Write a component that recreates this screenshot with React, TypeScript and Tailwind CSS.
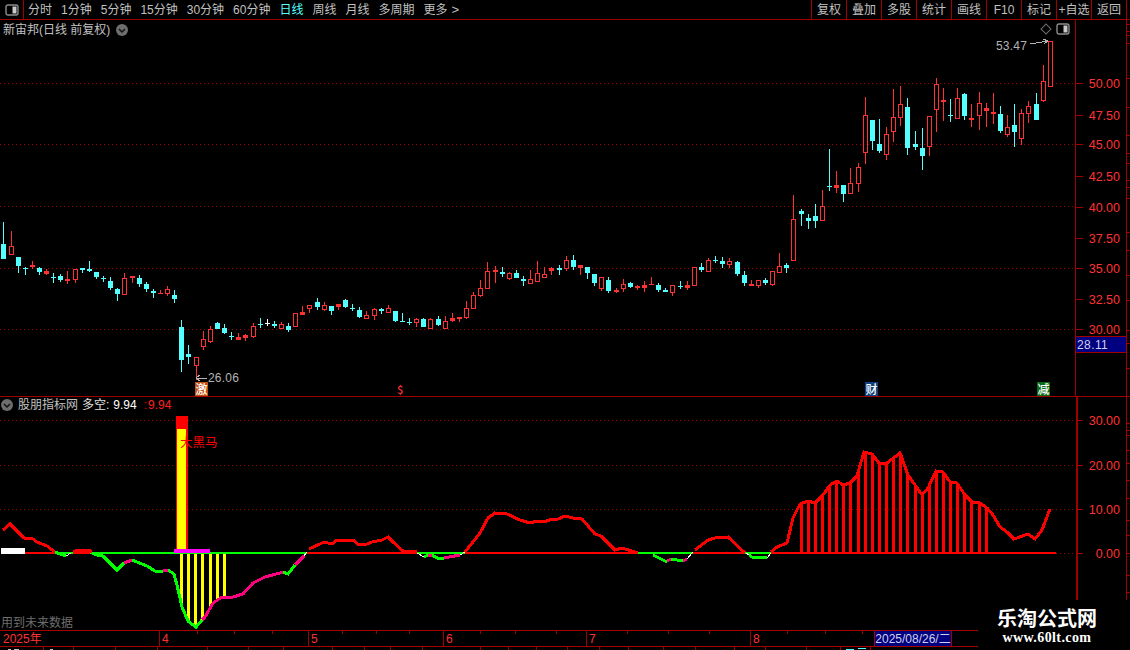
const RED = "#ff3232"
const GRID = "#a00000"
const CYAN = "#54ffff"
const UI_FONT = "font-['Liberation_Sans','Noto_Sans_CJK_SC',sans-serif]"

type Candle = [number, number, number, number, "r" | "c" | "w"]

// high, body top, body bottom, low - in page pixels, one candle every 7.12px
const candles: Candle[] = [
  [222, 244, 259, 259, "c"], [231, 246, 255, 255, "r"], [257, 257, 266, 273, "c"], [267, 268, 269, 275, "c"],
  [261, 265, 267, 269, "r"], [267, 268, 272, 275, "c"], [269, 271, 274, 275, "r"], [273, 277, 278, 283, "c"],
  [274, 276, 280, 282, "c"], [271, 279, 281, 284, "r"], [269, 269, 280, 283, "r"], [268, 268, 270, 273, "c"],
  [261, 269, 271, 272, "c"], [272, 272, 277, 279, "c"], [276, 278, 279, 282, "c"], [277, 281, 288, 290, "c"],
  [288, 289, 294, 301, "c"], [273, 278, 295, 295, "r"], [276, 276, 278, 283, "r"], [275, 278, 284, 287, "c"],
  [282, 284, 289, 292, "c"], [289, 291, 293, 298, "c"], [290, 293, 294, 294, "r"], [286, 289, 294, 296, "r"],
  [290, 295, 299, 303, "c"], [320, 327, 360, 372, "c"], [345, 354, 357, 364, "c"], [357, 357, 366, 380, "r"],
  [331, 339, 347, 350, "r"], [326, 329, 342, 343, "r"], [322, 323, 329, 329, "c"], [324, 328, 333, 334, "c"],
  [332, 336, 337, 340, "c"], [333, 337, 340, 340, "r"], [334, 335, 338, 341, "r"], [323, 326, 337, 338, "r"],
  [318, 324, 325, 328, "c"], [319, 323, 324, 326, "w"], [321, 324, 326, 328, "c"], [322, 324, 329, 329, "r"],
  [323, 326, 330, 332, "c"], [313, 313, 327, 327, "r"], [306, 312, 315, 315, "r"], [305, 305, 309, 313, "r"],
  [298, 302, 307, 310, "c"], [302, 305, 310, 311, "r"], [306, 306, 311, 315, "c"], [304, 304, 307, 310, "r"],
  [299, 300, 307, 308, "c"], [304, 308, 309, 311, "c"], [307, 310, 317, 318, "c"], [311, 315, 319, 319, "r"],
  [308, 309, 316, 320, "r"], [308, 309, 311, 314, "c"], [305, 308, 313, 313, "r"], [311, 311, 321, 322, "c"],
  [313, 321, 322, 322, "c"], [318, 322, 323, 325, "c"], [318, 319, 323, 327, "r"], [318, 319, 327, 327, "c"],
  [318, 319, 329, 329, "r"], [316, 319, 325, 326, "c"], [316, 321, 329, 329, "r"], [313, 318, 321, 322, "r"],
  [317, 317, 319, 322, "r"], [301, 308, 318, 319, "r"], [292, 295, 309, 309, "r"], [280, 288, 296, 297, "r"],
  [262, 271, 289, 289, "r"], [266, 270, 272, 283, "r"], [267, 272, 274, 277, "c"], [272, 273, 279, 280, "r"],
  [270, 273, 278, 278, "c"], [276, 279, 281, 286, "c"], [270, 279, 284, 284, "r"], [261, 273, 282, 282, "r"],
  [267, 274, 278, 278, "r"], [267, 268, 271, 275, "r"], [265, 268, 270, 275, "c"], [256, 260, 269, 271, "r"],
  [255, 260, 267, 270, "c"], [265, 265, 268, 275, "r"], [267, 267, 273, 279, "c"], [274, 274, 283, 286, "c"],
  [277, 277, 289, 291, "r"], [277, 280, 291, 293, "c"], [288, 290, 292, 293, "r"], [279, 284, 289, 292, "r"],
  [282, 283, 287, 288, "c"], [285, 286, 288, 290, "r"], [281, 285, 288, 292, "r"], [277, 284, 285, 285, "r"],
  [283, 285, 290, 292, "c"], [288, 290, 292, 292, "c"], [285, 285, 293, 296, "r"], [281, 286, 287, 289, "c"],
  [281, 285, 288, 290, "r"], [267, 267, 286, 286, "r"], [263, 267, 270, 272, "c"], [258, 260, 272, 272, "r"],
  [256, 260, 261, 263, "c"], [257, 261, 264, 268, "c"], [258, 261, 265, 268, "r"], [261, 262, 274, 276, "c"],
  [271, 275, 283, 286, "c"], [280, 284, 286, 286, "r"], [280, 280, 286, 288, "r"], [278, 280, 283, 285, "c"],
  [271, 271, 285, 286, "r"], [253, 266, 273, 273, "r"], [263, 265, 268, 273, "c"], [195, 219, 261, 261, "r"],
  [209, 211, 214, 226, "c"], [214, 218, 221, 229, "c"], [204, 216, 221, 228, "c"], [190, 206, 221, 221, "r"],
  [149, 186, 187, 191, "c"], [171, 185, 188, 193, "r"], [185, 185, 194, 202, "c"], [168, 183, 194, 194, "r"],
  [163, 167, 184, 192, "r"], [97, 115, 153, 164, "r"], [120, 120, 141, 150, "c"], [119, 144, 151, 153, "c"],
  [127, 134, 155, 160, "r"], [89, 117, 132, 142, "r"], [86, 104, 118, 126, "r"], [98, 107, 148, 155, "c"],
  [131, 144, 147, 150, "c"], [128, 148, 156, 170, "c"], [116, 116, 147, 156, "r"], [78, 84, 110, 132, "r"],
  [88, 100, 102, 121, "r"], [99, 115, 116, 122, "c"], [88, 98, 119, 119, "r"], [93, 94, 116, 120, "c"],
  [104, 118, 120, 127, "r"], [92, 103, 116, 130, "r"], [103, 108, 111, 127, "r"], [93, 112, 114, 124, "r"],
  [106, 114, 131, 133, "c"], [115, 127, 135, 137, "r"], [104, 125, 132, 147, "c"], [109, 113, 139, 145, "r"],
  [101, 106, 114, 123, "r"], [93, 104, 120, 120, "c"], [65, 81, 101, 102, "r"], [41, 41, 87, 87, "r"],
]

const cx = (i: number) => Math.round(3.4 + 7.118 * i)

type Pt = [number, number]
type Segment = { color: string; pts: Pt[] }

const segments: Segment[] = [
  { color: "#ff0000", pts: [[3, 530], [10, 524], [24, 538], [33, 539], [37, 542], [47, 546], [55, 552]] },
  { color: "#00ff00", pts: [[55, 552], [60, 554], [66, 556]] },
  { color: "#ffffff", pts: [[66, 556], [71, 553]] },
  { color: "#ff0000", pts: [[73, 552], [78, 550], [89, 550], [92, 552]] },
  { color: "#00ff00", pts: [[92, 553], [97, 555], [103, 556], [117, 570], [124, 563]] },
  { color: "#ff0080", pts: [[124, 563], [132, 560]] },
  { color: "#00ff00", pts: [[132, 560], [147, 566], [155, 571], [163, 571]] },
  { color: "#ff0080", pts: [[163, 570], [168, 570]] },
  { color: "#00ff00", pts: [[168, 570], [174, 574], [177, 585], [182, 607], [188, 621], [196, 627], [202, 620]] },
  { color: "#ff0080", pts: [[202, 620], [205, 617], [213, 603], [222, 597], [233, 597], [243, 594], [253, 583], [265, 577], [280, 573], [283, 572]] },
  { color: "#00ff00", pts: [[283, 572], [288, 574], [295, 565]] },
  { color: "#ff0080", pts: [[295, 565], [304, 556]] },
  { color: "#ffffff", pts: [[304, 556], [307, 552]] },
  { color: "#ff0000", pts: [[309, 549], [320, 544], [324, 542], [332, 544], [337, 540], [353, 540], [358, 544], [367, 544], [372, 542], [382, 540], [388, 537], [393, 542], [403, 551], [417, 552]] },
  { color: "#ffffff", pts: [[417, 553], [424, 557]] },
  { color: "#00ff00", pts: [[424, 557], [428, 555]] },
  { color: "#ff0080", pts: [[428, 555], [432, 555]] },
  { color: "#00ff00", pts: [[432, 555], [439, 559], [444, 558]] },
  { color: "#ff0080", pts: [[444, 558], [460, 555]] },
  { color: "#ffffff", pts: [[460, 555], [465, 552]] },
  { color: "#ff0000", pts: [[465, 552], [480, 533], [488, 518], [495, 513], [507, 514], [520, 520], [530, 523], [537, 521], [544, 522], [552, 519], [558, 519], [565, 516], [573, 518], [582, 519], [595, 534], [601, 536], [615, 550], [622, 548], [638, 553]] },
  { color: "#00ff00", pts: [[653, 555], [667, 562]] },
  { color: "#ff0080", pts: [[667, 561], [671, 559]] },
  { color: "#00ff00", pts: [[671, 559], [683, 561]] },
  { color: "#ff0080", pts: [[683, 561], [687, 559]] },
  { color: "#ffffff", pts: [[687, 559], [693, 552]] },
  { color: "#ff0000", pts: [[695, 550], [708, 540], [715, 538], [728, 537], [745, 553]] },
  { color: "#ffffff", pts: [[746, 553], [749, 555]] },
  { color: "#00ff00", pts: [[749, 555], [752, 557], [767, 558]] },
  { color: "#ffffff", pts: [[767, 558], [771, 553]] },
  { color: "#ff0000", pts: [[771, 552], [777, 547], [787, 543], [793, 518], [800, 504], [808, 501], [815, 503], [823, 495], [830, 485], [837, 481], [843, 485], [850, 483], [857, 476], [864, 452], [872, 454], [879, 463], [887, 463], [900, 453], [908, 475], [922, 495], [928, 488], [936, 471], [943, 472], [950, 482], [957, 483], [965, 495], [972, 502], [980, 503], [987, 508], [993, 515], [1000, 527], [1007, 532], [1014, 539], [1028, 534], [1035, 539], [1042, 530], [1050, 509]] },
]

const allPts = segments.flatMap((s) => s.pts)

function lineY(x: number) {
  for (let i = 0; i < allPts.length - 1; i++) {
    const [x0, y0] = allPts[i]
    const [x1, y1] = allPts[i + 1]
    if (x >= x0 && x <= x1 && x1 > x0) return y0 + ((y1 - y0) * (x - x0)) / (x1 - x0)
  }
  return 553
}

const redBars = Array.from({ length: 27 }, (_, i) => cx(112 + i))
const yellowBars = [181, 188, 195, 202, 210, 217, 224]
const greenZero: Pt[] = [[55, 73], [90, 307], [417, 465], [638, 693], [745, 771]]

const priceLabels = [
  ["50.00", 83], ["47.50", 115], ["45.00", 144], ["42.50", 176], ["40.00", 207],
  ["37.50", 238], ["35.00", 268], ["32.50", 299], ["30.00", 329],
] as const
const priceGrid = [83, 144, 206, 268, 329]
const indicatorLabels = [["30.00", 420], ["20.00", 465], ["10.00", 509], ["0.00", 553]] as const
const edgeTicksTop = [24, 31, 35, 43, 78, 107, 135, 153, 163, 180, 187, 198, 232, 250, 275, 300, 330, 343, 368]
const edgeTicksBottom = [423, 430, 435, 450, 463, 480, 498, 520, 535, 553, 575, 592]

const leftTabs = ["分时", "1分钟", "5分钟", "15分钟", "30分钟", "60分钟", "日线", "周线", "月线", "多周期", "更多"]
const rightTabs = ["复权", "叠加", "多股", "统计", "画线", "F10", "标记", "+自选", "返回"]
const months = [
  { label: "2025年", w: "w-[159px]" },
  { label: "4", w: "w-[149px]" },
  { label: "5", w: "w-[135px]" },
  { label: "6", w: "w-[143px]" },
  { label: "7", w: "w-[164px]" },
  { label: "8", w: "w-[124px]" },
]
const dateTicksUp = [197, 234, 272, 342, 376, 409, 480, 515, 556, 627, 668, 709, 787, 825, 862]
const dateTicksDown = [43, 73, 115, 157, 207, 248, 283, 332, 364, 390, 422, 480, 508, 536, 567, 599, 628, 663, 695, 734, 765, 806, 840, 870]

function PanelIcon() {
  return (
    <svg width="14" height="12" viewBox="0 0 14 12" className="shrink-0">
      <rect x="1" y="1" width="12" height="10" rx="2" fill="none" stroke="#8c8c8c" strokeWidth="1.4" />
      <rect x="7.5" y="2.5" width="4" height="7" fill="#c8c8c8" />
    </svg>
  )
}

function ChevronDot() {
  return (
    <svg width="12" height="12" viewBox="0 0 12 12" className="shrink-0">
      <circle cx="6" cy="6" r="6" fill="#6e6e6e" />
      <path d="M3 5 L6 8 L9 5" fill="none" stroke="#111" strokeWidth="1.5" />
    </svg>
  )
}

function DotPattern({ id }: { id: string }) {
  return (
    <defs>
      <pattern id={id} width="4" height="1" patternUnits="userSpaceOnUse">
        <rect width="1" height="1" fill={GRID} />
      </pattern>
    </defs>
  )
}

function Toolbar() {
  return (
    <div className="flex h-[20px] shrink-0 items-stretch border-b border-[#a00000] text-[12px] text-[#c0c0c0]">
      <div className="flex w-[24px] items-center justify-center border-r border-[#a00000]">
        <PanelIcon />
      </div>
      <div className="flex items-center gap-[9px] pl-[4px]">
        {leftTabs.map((t) => (
          <span key={t} className={t === "日线" ? "text-[#54ffff]" : ""}>{t}</span>
        ))}
        <span className="-ml-[5px] text-[13px]">&gt;</span>
      </div>
      <div className="ml-auto mr-[3px] flex border-r border-[#a00000]">
        {rightTabs.map((t) => (
          <div key={t} className="flex w-[35px] items-center justify-center border-l border-[#a00000] whitespace-nowrap">
            {t}
          </div>
        ))}
      </div>
    </div>
  )
}

function PriceChart() {
  return (
    <svg width="1075" height="376" viewBox="0 20 1075 376" className="[shape-rendering:crispEdges] shrink-0">
      <DotPattern id="priceDots" />
      {priceGrid.map((y) => (
        <rect key={y} x="0" y={y} width="1075" height="1" fill="url(#priceDots)" />
      ))}
      {candles.map(([high, top, bottom, low, kind], i) => {
        const x = cx(i)
        const color = kind === "r" ? RED : kind === "c" ? CYAN : "#ffffff"
        return (
          <g key={i}>
            <rect x={x} y={high} width={1} height={low - high} fill={color} />
            {kind === "r" && bottom - top > 3 ? (
              <rect x={x - 1.5} y={top + 0.5} width={4} height={bottom - top - 1} fill="#000" stroke={color} />
            ) : (
              <rect x={x - 2} y={top} width={5} height={Math.max(bottom - top, 1)} fill={color} />
            )}
          </g>
        )
      })}
      <g fill="none" stroke="#b4b4b4">
        <path d="M1030 44 L1048 41 M1043 39 L1048 41 L1044 44" />
        <path d="M196 378 L207 378 M200 375 L196 378 L200 381" />
      </g>
      <g className="font-['Liberation_Sans',sans-serif] [shape-rendering:auto]" fontSize="12" fill="#b4b4b4" letterSpacing="0.2">
        <text x="996" y="50">53.47</text>
        <text x="208" y="382">26.06</text>
      </g>
      <g className="font-['Noto_Sans_CJK_SC',sans-serif]" fontSize="12" fontWeight="500">
        <rect x="195" y="382" width="13" height="14" fill="#c0500f" />
        <text x="195.5" y="393.5" fill="#ffffff">激</text>
        <text x="397" y="394" fill={RED} fontSize="11">$</text>
        <rect x="865" y="382" width="13" height="14" fill="#0f3f80" />
        <text x="865.5" y="393.5" fill="#ffffff">财</text>
        <rect x="1037" y="382" width="13" height="14" fill="#0a6a12" />
        <text x="1037.5" y="393.5" fill="#ffffff">减</text>
      </g>
    </svg>
  )
}

function AxisSvg({ top, height, labels, ticks, thick }: { top: number; height: number; labels: readonly (readonly [string, number])[]; ticks: number[]; thick?: boolean }) {
  return (
    <svg width="55" height={height} viewBox={`1075 ${top} 55 ${height}`} className="[shape-rendering:crispEdges] shrink-0">
      <rect x={thick ? 1076 : 1075} y={top} width={thick ? 2 : 1} height={height} fill="#a00000" />
      <rect x="1126" y={top} width="1" height={height} fill="#a00000" />
      {labels.map(([label, y]) => (
        <g key={label}>
          <rect x="1076" y={y} width="7" height="1" fill="#a00000" />
          <text x="1120" y={y + 5} textAnchor="end" fontSize="12.5" fill={RED} className="font-['Liberation_Sans',sans-serif] [shape-rendering:auto]">
            {label}
          </text>
        </g>
      ))}
      {ticks.map((y) => (
        <rect key={y} x="1127" y={y} width="3" height="1" fill="#a00000" />
      ))}
    </svg>
  )
}

function IndicatorChart() {
  return (
    <svg width="1075" height="233" viewBox="0 397 1075 233" className="[shape-rendering:crispEdges] shrink-0">
      <DotPattern id="indicatorDots" />
      {[420, 465, 509].map((y) => (
        <rect key={y} x="0" y={y} width="1075" height="1" fill="url(#indicatorDots)" />
      ))}
      <rect x="1056" y="553" width="19" height="1" fill="url(#indicatorDots)" />

      {/* 多空 columns */}
      {redBars.map((x) => (
        <rect key={x} x={x - 1} y={lineY(x)} width={3} height={553 - lineY(x)} fill="#ff0000" />
      ))}
      {yellowBars.map((x) => (
        <rect key={x} x={x - 1} y={553} width={3} height={lineY(x) - 553} fill="#ffff00" />
      ))}

      <rect x="25" y="552" width="1031" height="2" fill="#ff0000" />
      {greenZero.map(([a, b]) => (
        <rect key={a} x={a} y="552" width={b - a} height="2" fill="#00ff00" />
      ))}
      <rect x="1" y="548" width="24" height="6" fill="#ffffff" />

      <rect x="176" y="416" width="12" height="137" fill="#ff0000" />
      <rect x="177" y="429" width="9" height="124" fill="#ffff00" />
      <rect x="174" y="549" width="36" height="4" fill="#ff00ff" />

      {segments.map((s, i) => (
        <polyline
          key={i}
          points={s.pts.map((p) => p.join(",")).join(" ")}
          fill="none"
          stroke={s.color}
          strokeWidth={s.color === "#ffffff" ? 1 : 3}
        />
      ))}

      <text x="180" y="446.5" fontSize="12.5" fill="#ff0000" className="font-['Noto_Sans_CJK_SC',sans-serif] [shape-rendering:auto]">大黑马</text>
    </svg>
  )
}

export default function App() {
  return (
    <div className={`relative flex h-[650px] w-[1130px] flex-col overflow-hidden bg-black ${UI_FONT}`}>
      <Toolbar />

      <div className="relative flex h-[377px] shrink-0 items-start border-b border-[#a00000]">
        <PriceChart />
        <AxisSvg top={20} height={376} labels={priceLabels} ticks={edgeTicksTop} />

        <div className="absolute left-[3px] top-[2px] flex items-center gap-[6px] text-[12px] leading-[16px] text-[#c0c0c0]">
          <span>新宙邦(日线 前复权)</span>
          <ChevronDot />
        </div>
        <div className="absolute left-[1042px] top-[3px] flex items-center gap-[6px]">
          <span className="h-[8px] w-[8px] rotate-45 border border-[#6e6e6e]" />
          <PanelIcon />
        </div>
        <div className="absolute left-[1076px] top-[317px] flex h-[15px] w-[50px] items-center bg-[#000080] pl-[1px] text-[12px] tracking-[0.4px] text-[#d0d0e8] outline outline-[#a00000]">
          28.11
        </div>
      </div>

      <div className="relative flex h-[234px] shrink-0 items-start border-b border-[#a00000]">
        <IndicatorChart />
        <AxisSvg top={397} height={233} labels={indicatorLabels} ticks={edgeTicksBottom} thick />

        <div className="absolute left-[1px] top-[0px] flex items-center text-[12px] leading-[16px] text-[#c0c0c0]">
          <ChevronDot />
          <span className="ml-[5px]">股朋指标网</span>
          <span className="ml-[4px] text-[#e0e0e0]">多空:</span>
          <span className="ml-[4px] text-white">9.94</span>
          <span className="ml-[7px] text-[#ff0000]">:</span>
          <span className="ml-[1px] text-[#ff2020]">9.94</span>
        </div>
        <span className="absolute bottom-0 left-[1px] text-[12px] leading-[14px] text-[#6e6e6e]">用到未来数据</span>
      </div>

      <div className="relative flex h-[16px] w-[978px] shrink-0 border-b border-[#a00000] text-[12px] leading-[16px] text-[#ff3232]">
        {months.map((m, i) => (
          <div key={m.label} className={`${m.w} ${i > 0 ? "border-l border-[#a00000] pl-[2px]" : "pl-[3px]"}`}>
            {m.label}
          </div>
        ))}
        <div className="w-[78px] border-x border-[#a00000] bg-[#000080] text-center text-[#d0d0e8]">2025/08/26/二</div>
        {dateTicksUp.map((x) => (
          <svg key={x} width="1" height="3" className="absolute top-0" style={{ left: x }}>
            <rect width="1" height="3" fill="#a00000" />
          </svg>
        ))}
      </div>

      {/* tick stubs and the top edge of the hidden tab row */}
      <svg width="978" height="3" className="[shape-rendering:crispEdges] shrink-0">
        {dateTicksDown.map((x) => (
          <rect key={x} x={x} y="0" width="1" height="3" fill="#a00000" />
        ))}
        <rect x="8" y="2" width="3" height="1" fill="#c0c0c0" />
        <rect x="14" y="2" width="5" height="1" fill="#c0c0c0" />
        <rect x="50" y="2" width="3" height="1" fill="#c0c0c0" />
        <rect x="846" y="2" width="8" height="1" fill="#54ffff" />
        <rect x="858" y="1" width="8" height="1" fill="#54ffff" />
      </svg>

      {/* site watermark sits on top of the chart corner */}
      <div className="absolute bottom-0 right-0 flex h-[50px] w-[152px] flex-col items-center bg-black pr-[14px] pt-[6px]">
        <span className="font-['Noto_Sans_CJK_SC',serif] text-[20px] font-bold leading-[24px] text-white">乐淘公式网</span>
        <span className="font-['Liberation_Serif',serif] text-[14px] font-bold leading-[15px] tracking-[0.4px] text-white">www.60lt.com</span>
      </div>
    </div>
  )
}
